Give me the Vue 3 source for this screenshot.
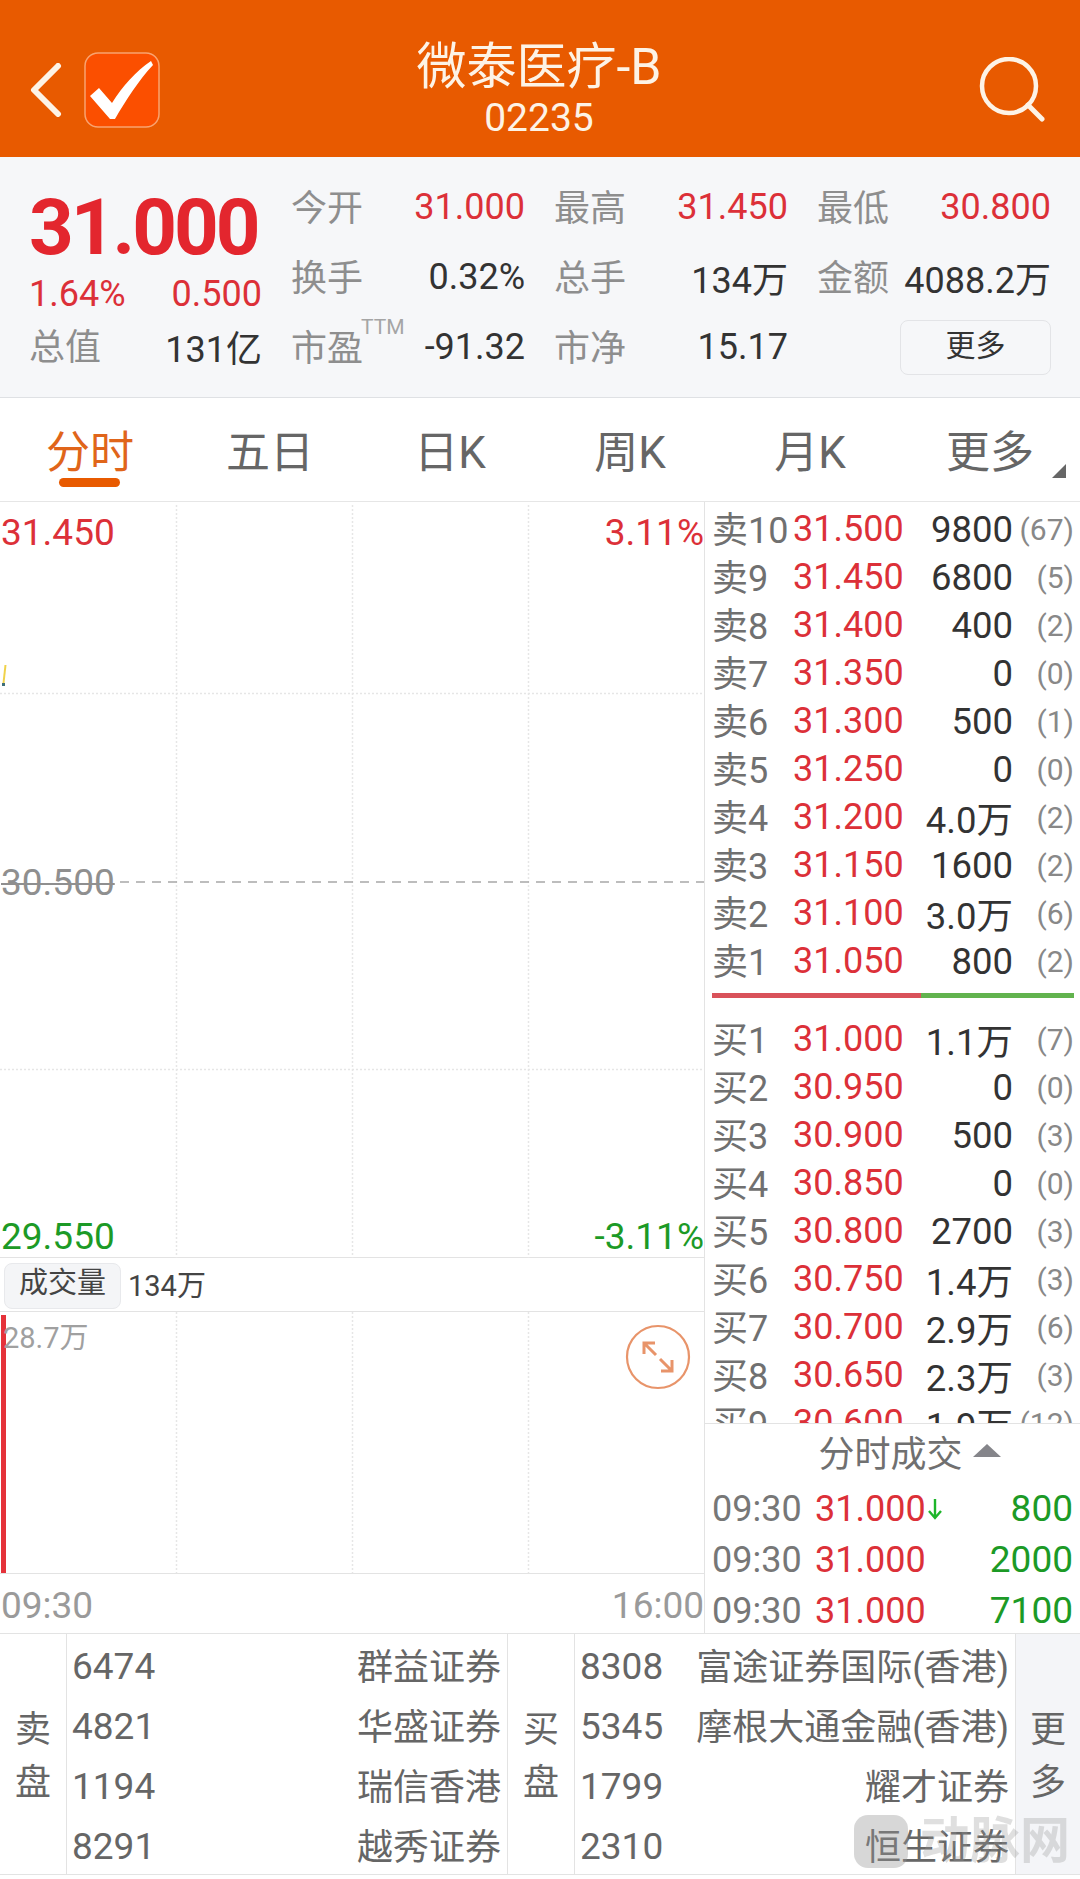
<template>
  <div class="page">
    <header class="topbar">
      <div class="top-left">
        <svg class="back" width="32" height="54" viewBox="0 0 32 54">
          <path d="M28 3 L4 27 L28 51" fill="none" stroke="#fdf3e6" stroke-width="6" stroke-linecap="round" stroke-linejoin="round" />
        </svg>
        <svg class="check" width="76" height="76" viewBox="0 0 76 76">
          <rect x="1" y="1" width="74" height="74" rx="13" fill="#fb4f00" stroke="#f9a36f" stroke-width="1.5" />
          <path d="M6 44 L15 36 L28 51 C38 35 52 19 67 9 L69 13 C55 28 42 48 31 67 L26 67 Z" fill="#fff" />
        </svg>
      </div>
      <div class="top-title">
        <div class="name">微泰医疗-B</div>
        <div class="code">02235</div>
      </div>
      <svg class="search" width="66" height="66" viewBox="0 0 66 66">
        <circle cx="30" cy="29" r="27" fill="none" stroke="#fdf3e6" stroke-width="4.5" />
        <path d="M49 48 L63 62" fill="none" stroke="#fdf3e6" stroke-width="5" stroke-linecap="round" />
      </svg>
    </header>

    <section class="quote">
      <div class="quote-left">
        <div class="big-price">31.000</div>
        <div class="change"><span>1.64%</span><span>0.500</span></div>
        <div class="total"><span class="lbl">总值</span><span class="dark">131亿</span></div>
      </div>
      <div class="quote-grid">
        <div v-for="s in stats" :key="s.label" class="stat">
          <span class="lbl">{{ s.label }}<sup v-if="s.sup" class="ttm">TTM</sup></span>
          <span :class="s.red ? 'red' : 'dark'">{{ s.value }}</span>
        </div>
        <div class="more-btn">更多</div>
      </div>
    </section>

    <nav class="tabs">
      <div v-for="(t, i) in tabs" :key="t" class="tab" :class="{ active: i === 0 }">{{ t }}</div>
      <span class="corner"></span>
    </nav>

    <main class="body">
      <div class="charts">
        <div class="price-chart">
          <svg class="lines" width="704" height="756" viewBox="0 0 704 756">
            <g stroke="#e6e6e6" stroke-width="1.5" stroke-dasharray="2 2">
              <path d="M176.5 3 V756 M352.5 3 V756 M528.5 3 V756" />
              <path d="M0 191.5 H704 M0 567.5 H704" />
            </g>
            <path d="M120 380 H704" stroke="#a8a8a8" stroke-width="1.5" stroke-dasharray="9 7" />
            <path d="M5.5 163 L3.5 181" stroke="#f0d24a" stroke-width="2" />
            <rect x="2" y="181" width="3" height="3" fill="#3f6f7a" />
          </svg>
          <span class="axis tl red">31.450</span>
          <span class="axis tr red">3.11%</span>
          <span class="axis ml">30.500</span>
          <span class="axis bl green">29.550</span>
          <span class="axis br green">-3.11%</span>
        </div>
        <div class="vol-head">
          <span class="chip">成交量</span>
          <span class="vol-total">134万</span>
        </div>
        <div class="vol-chart">
          <svg class="lines" width="704" height="261" viewBox="0 0 704 261">
            <path d="M176.5 0 V261 M352.5 0 V261 M528.5 0 V261" stroke="#e6e6e6" stroke-width="1.5" stroke-dasharray="2 2" />
            <rect x="1" y="3" width="5" height="258" fill="#e5323a" />
          </svg>
          <span class="vol-max">28.7万</span>
          <svg class="expand" width="66" height="66" viewBox="0 0 66 66">
            <circle cx="33" cy="33" r="31" fill="none" stroke="#e8946a" stroke-width="2.2" />
            <g fill="none" stroke="#e8946a" stroke-width="3">
              <path d="M19 30 V19 H30 M19 19 L31 31" />
              <path d="M47 36 V47 H36 M47 47 L35 35" />
            </g>
          </svg>
        </div>
        <div class="time-axis"><span>09:30</span><span>16:00</span></div>
      </div>

      <aside class="side">
        <div class="book">
          <div v-for="r in sells" :key="r.n" class="book-row">
            <span class="b-label">{{ r.n }}</span>
            <span class="red">{{ r.p }}</span>
            <span class="b-qty">{{ r.q }}</span>
            <span class="b-count">({{ r.c }})</span>
          </div>
          <div class="ratio"><i class="ratio-red"></i><i class="ratio-green"></i></div>
          <div v-for="r in buys" :key="r.n" class="book-row">
            <span class="b-label">{{ r.n }}</span>
            <span class="red">{{ r.p }}</span>
            <span class="b-qty">{{ r.q }}</span>
            <span class="b-count">({{ r.c }})</span>
          </div>
        </div>
        <div class="ticks">
          <div class="ticks-head">分时成交<span class="up"></span></div>
          <div v-for="(t, i) in ticks" :key="i" class="tick">
            <span class="t-time">09:30</span>
            <span class="red">31.000</span>
            <svg v-if="i === 0" class="t-arrow" width="16" height="22" viewBox="0 0 16 22">
              <path d="M8 1 V19 M2 13 L8 20 L14 13" fill="none" stroke="#1db52a" stroke-width="2.4" />
            </svg>
            <span class="t-vol">{{ t }}</span>
          </div>
        </div>
      </aside>
    </main>

    <section class="brokers">
      <div class="b-side">卖<br />盘</div>
      <div class="b-list">
        <div v-for="b in sellBrokers" :key="b[0]" class="b-row"><span class="b-id">{{ b[0] }}</span><span>{{ b[1] }}</span></div>
      </div>
      <div class="b-side">买<br />盘</div>
      <div class="b-list">
        <div v-for="b in buyBrokers" :key="b[0]" class="b-row"><span class="b-id">{{ b[0] }}</span><span>{{ b[1] }}</span></div>
      </div>
      <div class="b-side b-more">更<br />多</div>
    </section>

    <div class="watermark"><span class="wm-logo"></span><span>动脉网</span></div>
  </div>
</template>

<script setup>
const stats = [
  { label: '今开', value: '31.000', red: true },
  { label: '最高', value: '31.450', red: true },
  { label: '最低', value: '30.800', red: true },
  { label: '换手', value: '0.32%' },
  { label: '总手', value: '134万' },
  { label: '金额', value: '4088.2万' },
  { label: '市盈', value: '-91.32', sup: true },
  { label: '市净', value: '15.17' },
]

const tabs = ['分时', '五日', '日K', '周K', '月K', '更多']

const sells = [
  { n: '卖10', p: '31.500', q: '9800', c: 67 },
  { n: '卖9', p: '31.450', q: '6800', c: 5 },
  { n: '卖8', p: '31.400', q: '400', c: 2 },
  { n: '卖7', p: '31.350', q: '0', c: 0 },
  { n: '卖6', p: '31.300', q: '500', c: 1 },
  { n: '卖5', p: '31.250', q: '0', c: 0 },
  { n: '卖4', p: '31.200', q: '4.0万', c: 2 },
  { n: '卖3', p: '31.150', q: '1600', c: 2 },
  { n: '卖2', p: '31.100', q: '3.0万', c: 6 },
  { n: '卖1', p: '31.050', q: '800', c: 2 },
]

const buys = [
  { n: '买1', p: '31.000', q: '1.1万', c: 7 },
  { n: '买2', p: '30.950', q: '0', c: 0 },
  { n: '买3', p: '30.900', q: '500', c: 3 },
  { n: '买4', p: '30.850', q: '0', c: 0 },
  { n: '买5', p: '30.800', q: '2700', c: 3 },
  { n: '买6', p: '30.750', q: '1.4万', c: 3 },
  { n: '买7', p: '30.700', q: '2.9万', c: 6 },
  { n: '买8', p: '30.650', q: '2.3万', c: 3 },
  { n: '买9', p: '30.600', q: '1.9万', c: 12 },
]

const ticks = ['800', '2000', '7100']

const sellBrokers = [
  ['6474', '群益证券'],
  ['4821', '华盛证券'],
  ['1194', '瑞信香港'],
  ['8291', '越秀证券'],
]

const buyBrokers = [
  ['8308', '富途证券国际(香港)'],
  ['5345', '摩根大通金融(香港)'],
  ['1799', '耀才证券'],
  ['2310', '恒生证券'],
]
</script>

<style>
html,
body {
  margin: 0;
  background: #fff;
}
</style>

<style scoped>
.page {
  position: relative;
  width: 1080px;
  height: 1879px;
  overflow: hidden;
  background: #fff;
  font-family: Roboto, "Noto Sans CJK SC", sans-serif;
  font-size: 36px;
  color: #333;
}

.red {
  color: #dc3038;
}

.green {
  color: #1c9a26;
}

.dark {
  color: #333;
}

.lbl {
  color: #8e8e8e;
  padding-bottom: 4px;
}

/* top bar */
.topbar {
  height: 157px;
  box-sizing: border-box;
  padding: 22px 35px 0 30px;
  background: #e85a00;
  display: grid;
  grid-template-columns: 1fr auto 1fr;
  align-items: center;
  color: #fdf3e6;
}

.top-left {
  display: flex;
  align-items: center;
  gap: 22px;
}

.top-title {
  padding-left: 3px;
  text-align: center;
}

.name {
  font-size: 50px;
  line-height: 56px;
}

.code {
  font-size: 39px;
  line-height: 44px;
  margin-top: 1px;
}

.search {
  justify-self: end;
}

/* quote panel */
.quote {
  height: 241px;
  box-sizing: border-box;
  border-bottom: 1px solid #dfe1e4;
  background: #f6f7f9;
  padding-left: 29px;
  display: flex;
}

.quote-left {
  width: 233px;
  margin-right: 29px;
  flex: none;
}

.big-price {
  font-size: 78px;
  font-weight: 700;
  color: #e3262e;
  line-height: 80px;
  margin-top: 31px;
  letter-spacing: -3px;
}

.change {
  display: flex;
  justify-content: space-between;
  color: #dc3038;
  line-height: 50px;
  margin-top: 1px;
}

.total {
  display: flex;
  justify-content: space-between;
  align-items: center;
  line-height: 50px;
  margin-top: 4px;
}

.quote-grid {
  width: 760px;
  display: grid;
  grid-template-columns: repeat(3, 234px);
  column-gap: 29px;
  grid-auto-rows: 70px;
  padding-top: 15px;
}

.stat {
  display: flex;
  justify-content: space-between;
  align-items: center;
  white-space: nowrap;
}

.ttm {
  position: absolute;
  font-size: 21px;
  line-height: 21px;
  margin-top: -2px;
  margin-left: -2px;
  color: #a5a5a5;
}

.more-btn {
  align-self: center;
  justify-self: end;
  width: 151px;
  height: 55px;
  box-sizing: border-box;
  border: 1.5px solid #e3e4e7;
  border-radius: 8px;
  font-size: 30px;
  line-height: 50px;
  text-align: center;
  color: #333;
}

/* tabs */
.tabs {
  position: relative;
  height: 104px;
  box-sizing: border-box;
  padding-bottom: 2px;
  border-bottom: 1px solid #e6e6e6;
  display: grid;
  grid-template-columns: repeat(6, 1fr);
  align-items: center;
}

.tab {
  position: relative;
  font-size: 44px;
  text-align: center;
  color: #666;
}

.tab.active {
  color: #e0651a;
}

.tab.active::after {
  content: "";
  position: absolute;
  left: 59px;
  top: 61px;
  width: 61px;
  height: 9px;
  border-radius: 5px;
  background: #e85a00;
}

.corner {
  position: absolute;
  right: 14px;
  top: 66px;
  border-left: 14px solid transparent;
  border-bottom: 14px solid #666;
}

/* main area */
.body {
  display: flex;
  height: 1131px;
}

.charts {
  width: 705px;
  box-sizing: border-box;
  border-right: 1px solid #e3e3e3;
  flex: none;
}

.price-chart {
  position: relative;
  height: 756px;
  border-bottom: 1.5px solid #e3e3e3;
  box-sizing: border-box;
}

.lines {
  position: absolute;
  left: 0;
  top: 0;
}

.axis {
  position: absolute;
  font-size: 37px;
  line-height: 44px;
}

.tl {
  left: 1px;
  top: 9px;
}

.tr {
  right: 0;
  top: 9px;
}

.ml {
  left: 1px;
  top: 359px;
  color: #8f8f8f;
  text-decoration: line-through;
  text-decoration-thickness: 1.5px;
}

.bl {
  left: 1px;
  top: 713px;
}

.br {
  right: 0;
  top: 713px;
}

.vol-head {
  height: 54px;
  box-sizing: border-box;
  border-bottom: 1.5px solid #e3e3e3;
  display: flex;
  align-items: center;
  padding-left: 4px;
  gap: 7px;
}

.chip {
  width: 117px;
  height: 46px;
  margin-top: 3px;
  box-sizing: border-box;
  border: 1px solid #e8e9ec;
  border-radius: 8px;
  background: #f4f5f7;
  font-size: 29px;
  line-height: 38px;
  text-align: center;
  color: #444;
}

.vol-total {
  font-size: 29px;
  padding-bottom: 4px;
  color: #444;
}

.vol-chart {
  position: relative;
  height: 262px;
  box-sizing: border-box;
  border-bottom: 1.5px solid #e3e3e3;
}

.vol-max {
  position: absolute;
  left: 3px;
  top: 6px;
  font-size: 29px;
  line-height: 40px;
  color: #a0a0a0;
}

.expand {
  position: absolute;
  left: 625px;
  top: 12px;
}

.time-axis {
  height: 59px;
  box-sizing: border-box;
  display: flex;
  justify-content: space-between;
  align-items: center;
  padding: 4px 0 0 1px;
  font-size: 37px;
  color: #9a9a9a;
}

/* order book */
.side {
  flex: 1;
  min-width: 0;
}

.book {
  height: 922px;
  box-sizing: border-box;
  margin-top: -1px;
  padding: 0 6px 0 7px;
  overflow: hidden;
}

.book-row {
  height: 48px;
  display: grid;
  grid-template-columns: 81px 116px 104px 1fr;
  align-items: center;
  white-space: nowrap;
}

.b-label {
  color: #707070;
  padding-bottom: 4px;
}

.b-qty {
  text-align: right;
  font-size: 36.5px;
  color: #333;
}

.b-count {
  text-align: right;
  font-size: 30px;
  color: #888;
}

.ratio {
  display: flex;
  height: 5px;
  margin: 12px 0 13px;
}

.ratio-red {
  width: 209px;
  background: #d9525a;
}

.ratio-green {
  flex: 1;
  background: #62b34e;
}

.ticks {
  height: 210px;
  box-sizing: border-box;
  border-top: 1px solid #e3e3e3;
  padding: 0 7px;
}

.ticks-head {
  height: 59px;
  box-sizing: border-box;
  display: flex;
  align-items: center;
  justify-content: center;
  gap: 10px;
  color: #707070;
  padding: 0 0 5px 34px;
}

.up {
  border-left: 14px solid transparent;
  border-right: 14px solid transparent;
  border-bottom: 13px solid #85858a;
  margin-top: -2px;
}

.tick {
  height: 51px;
  display: flex;
  align-items: center;
}

.t-time {
  width: 103px;
  color: #777;
}

.t-arrow {
  margin-left: 1px;
}

.t-vol {
  margin-left: auto;
  font-size: 37px;
  color: #1c9a26;
}

/* brokers */
.brokers {
  height: 242px;
  box-sizing: border-box;
  border-top: 1.5px solid #e3e3e3;
  border-bottom: 1.5px solid #e3e3e3;
  display: flex;
  color: #666;
}

.b-side {
  width: 66px;
  flex: none;
  box-sizing: border-box;
  text-align: center;
  line-height: 53px;
  padding-top: 70px;
}

.b-list {
  width: 442px;
  flex: none;
  box-sizing: border-box;
  border-left: 1px solid #e3e3e3;
  border-right: 1px solid #e3e3e3;
  padding: 0 6px 0 5px;
}

.b-row {
  height: 60px;
  display: flex;
  justify-content: space-between;
  align-items: center;
  white-space: nowrap;
}

.b-id {
  font-size: 37px;
  padding-top: 4px;
}

.b-more {
  flex: 1;
  background: #f4f5f8;
}

.watermark {
  position: absolute;
  left: 854px;
  top: 1815px;
  display: flex;
  align-items: center;
  gap: 12px;
  font-size: 50px;
  line-height: 53px;
  font-weight: 700;
  color: rgba(150, 150, 150, 0.3);
  pointer-events: none;
}

.wm-logo {
  width: 54px;
  height: 53px;
  border-radius: 14px;
  background: rgba(150, 150, 150, 0.38);
}
</style>
